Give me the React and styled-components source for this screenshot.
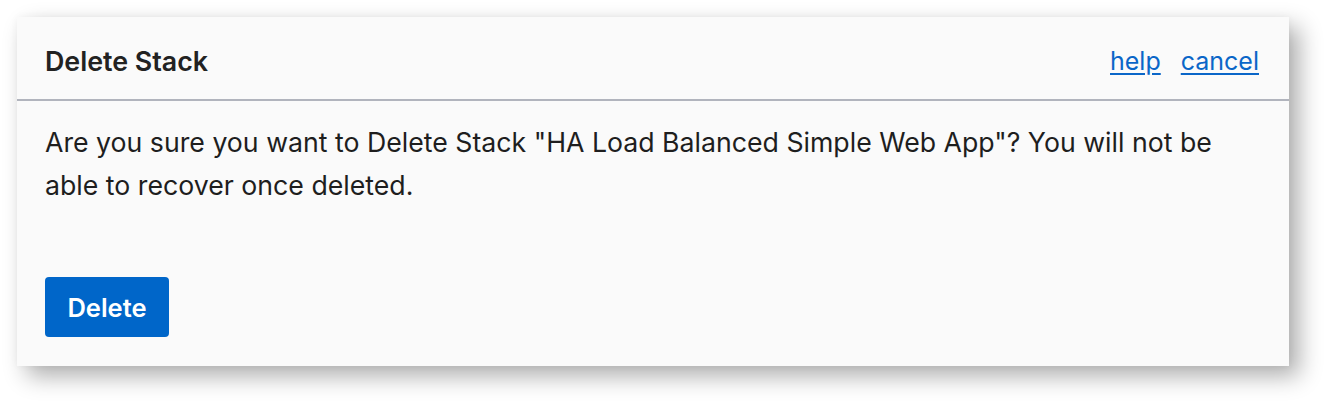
import React from 'react';
import styled, { createGlobalStyle } from 'styled-components';

const GlobalStyle = createGlobalStyle`
  body {
    margin: 0;
    background: #ffffff;
    font-family: Inter, "Liberation Sans", Arial, sans-serif;
  }
`;

const Page = styled.div`
  padding: 17px 0 0 17px;
  height: 415px;
  box-sizing: border-box;
`;

const Dialog = styled.div`
  width: 1272px;
  height: 349px;
  background: #fafafa;
  box-shadow: 10px 10px 22px rgba(0, 0, 0, 0.32), 0 0 8px rgba(0, 0, 0, 0.04);
  display: flex;
  flex-direction: column;
`;

const Header = styled.div`
  height: 84px;
  display: flex;
  align-items: center;
  justify-content: space-between;
  padding: 6px 30px 0 28px;
  box-sizing: border-box;
  border-bottom: 2px solid #b1b4bd;
`;

const Title = styled.h2`
  margin: 0;
  font-size: 26.8px;
  font-weight: 600;
  color: #222222;
`;

const Links = styled.div`
  display: flex;
  gap: 20px;
`;

const Link = styled.a`
  font-size: 25px;
  color: #0a66c8;
  text-decoration: underline;
  text-underline-offset: 3px;
  cursor: pointer;
`;

const Body = styled.div`
  padding: 20px 28px 0 28px;
  display: flex;
  flex-direction: column;
  align-items: flex-start;
`;

const Message = styled.p`
  margin: 0;
  font-size: 26.7px;
  line-height: 43px;
  color: #1e1e1e;
  max-width: 1200px;
`;

const DeleteButton = styled.button`
  margin-top: 70px;
  width: 124px;
  height: 60px;
  border: none;
  border-radius: 4px;
  background: #0066c9;
  color: #ffffff;
  font-family: Inter, "Liberation Sans", Arial, sans-serif;
  font-size: 25.5px;
  font-weight: 600;
  cursor: pointer;
`;

const App = () => {
  return (
    <Page>
      <GlobalStyle />
      <Dialog>
        <Header>
          <Title>Delete Stack</Title>
          <Links>
            <Link>help</Link>
            <Link>cancel</Link>
          </Links>
        </Header>
        <Body>
          <Message>
            Are you sure you want to Delete Stack "HA Load Balanced Simple Web App"? You will not be able to recover once deleted.
          </Message>
          <DeleteButton>Delete</DeleteButton>
        </Body>
      </Dialog>
    </Page>
  );
};

export default App;
